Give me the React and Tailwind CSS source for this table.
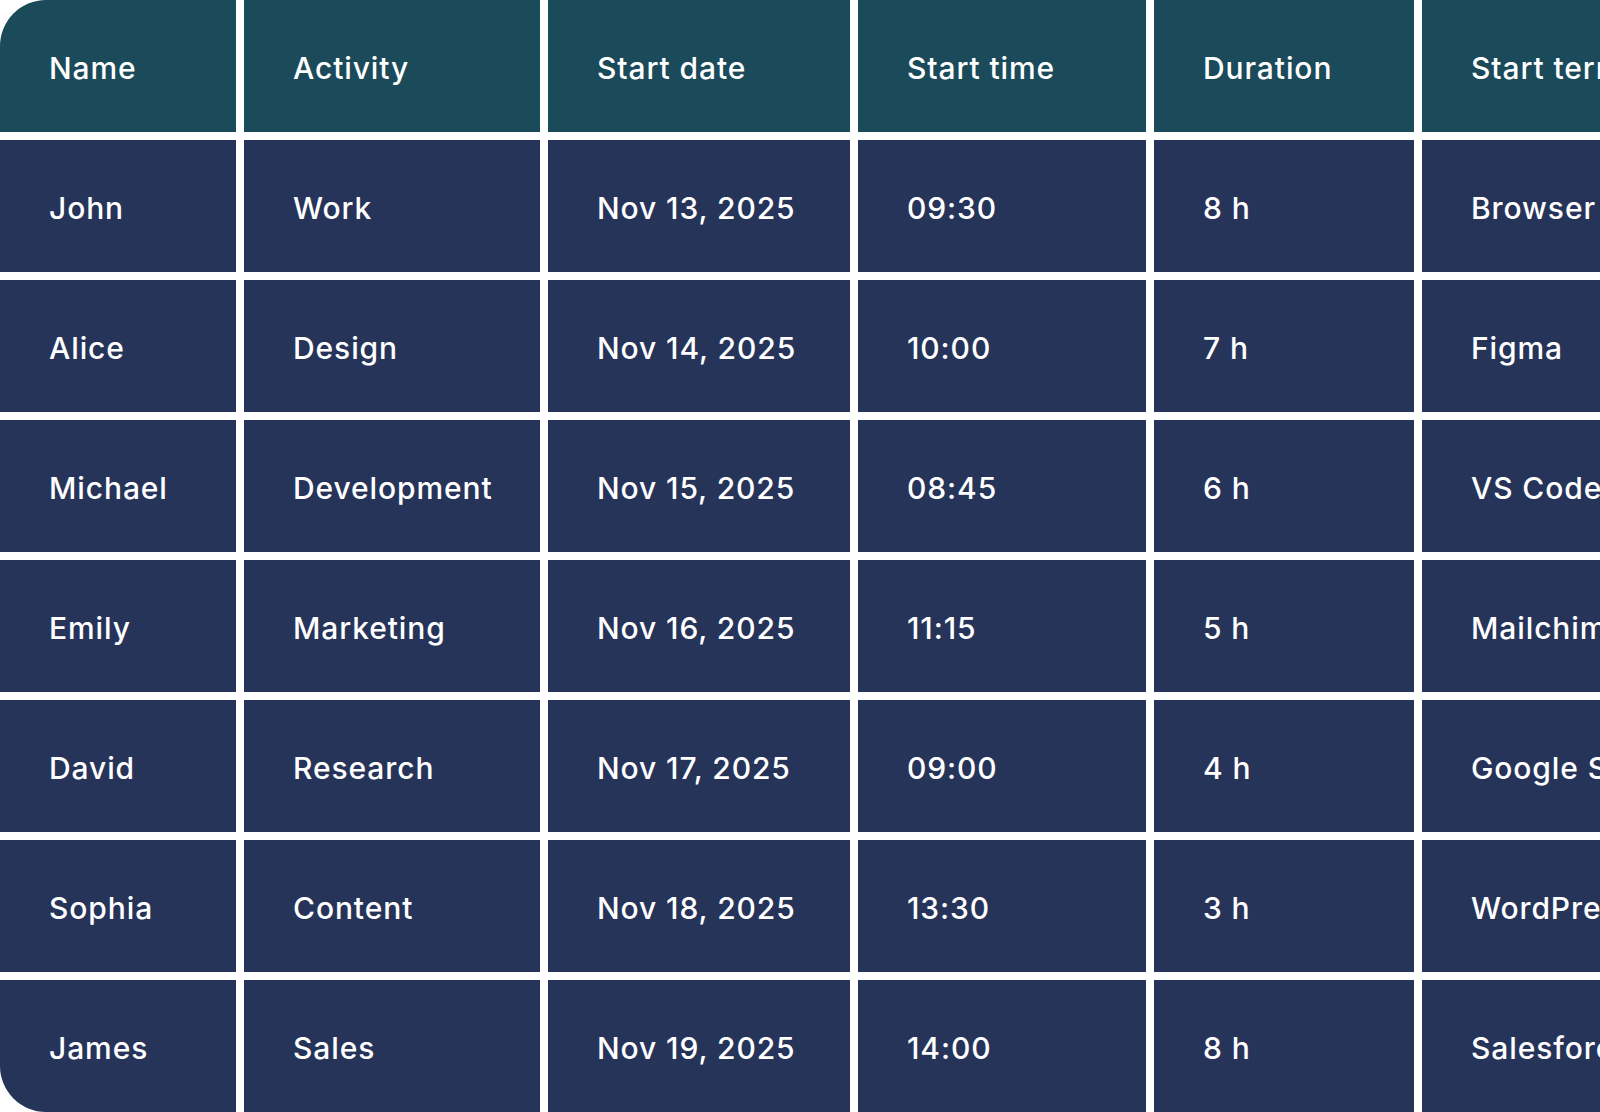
import React from "react";

const columns = [
  { label: "Name", w: "w-[236px]" },
  { label: "Activity", w: "w-[296px]" },
  { label: "Start date", w: "w-[302px]" },
  { label: "Start time", w: "w-[288px]" },
  { label: "Duration", w: "w-[260px]" },
  { label: "Start terminal", w: "w-[300px]" },
];

const rows = [
  ["John", "Work", "Nov 13, 2025", "09:30", "8 h", "Browser"],
  ["Alice", "Design", "Nov 14, 2025", "10:00", "7 h", "Figma"],
  ["Michael", "Development", "Nov 15, 2025", "08:45", "6 h", "VS Code"],
  ["Emily", "Marketing", "Nov 16, 2025", "11:15", "5 h", "Mailchimp"],
  ["David", "Research", "Nov 17, 2025", "09:00", "4 h", "Google Sheets"],
  ["Sophia", "Content", "Nov 18, 2025", "13:30", "3 h", "WordPress"],
  ["James", "Sales", "Nov 19, 2025", "14:00", "8 h", "Salesforce"],
];

export default function App() {
  return (
    <div
      className="w-[1600px] h-[1112px] bg-white overflow-hidden"
      style={{ fontFamily: "Inter, 'Noto Sans', sans-serif" }}
    >
      <div className="flex flex-col gap-2 w-max">
        <div className="flex gap-2">
          {columns.map((c, i) => (
            <div
              key={c.label}
              className={`${c.w} shrink-0 h-[132px] flex items-center pl-[49px] pt-1 bg-[#1b4a5a] text-white text-[30px] tracking-[0.9px] font-medium whitespace-nowrap ${
                i === 0 ? "rounded-tl-[46px]" : ""
              }`}
            >
              {c.label}
            </div>
          ))}
        </div>
        {rows.map((r, ri) => (
          <div key={r[0]} className="flex gap-2">
            {r.map((v, ci) => (
              <div
                key={ci}
                className={`${columns[ci].w} shrink-0 h-[132px] flex items-center pl-[49px] pt-1 bg-[#26345a] text-white text-[30px] tracking-[0.9px] font-medium whitespace-nowrap ${
                  ci === 0 && ri === rows.length - 1 ? "rounded-bl-[46px]" : ""
                }`}
              >
                {v}
              </div>
            ))}
          </div>
        ))}
      </div>
    </div>
  );
}
